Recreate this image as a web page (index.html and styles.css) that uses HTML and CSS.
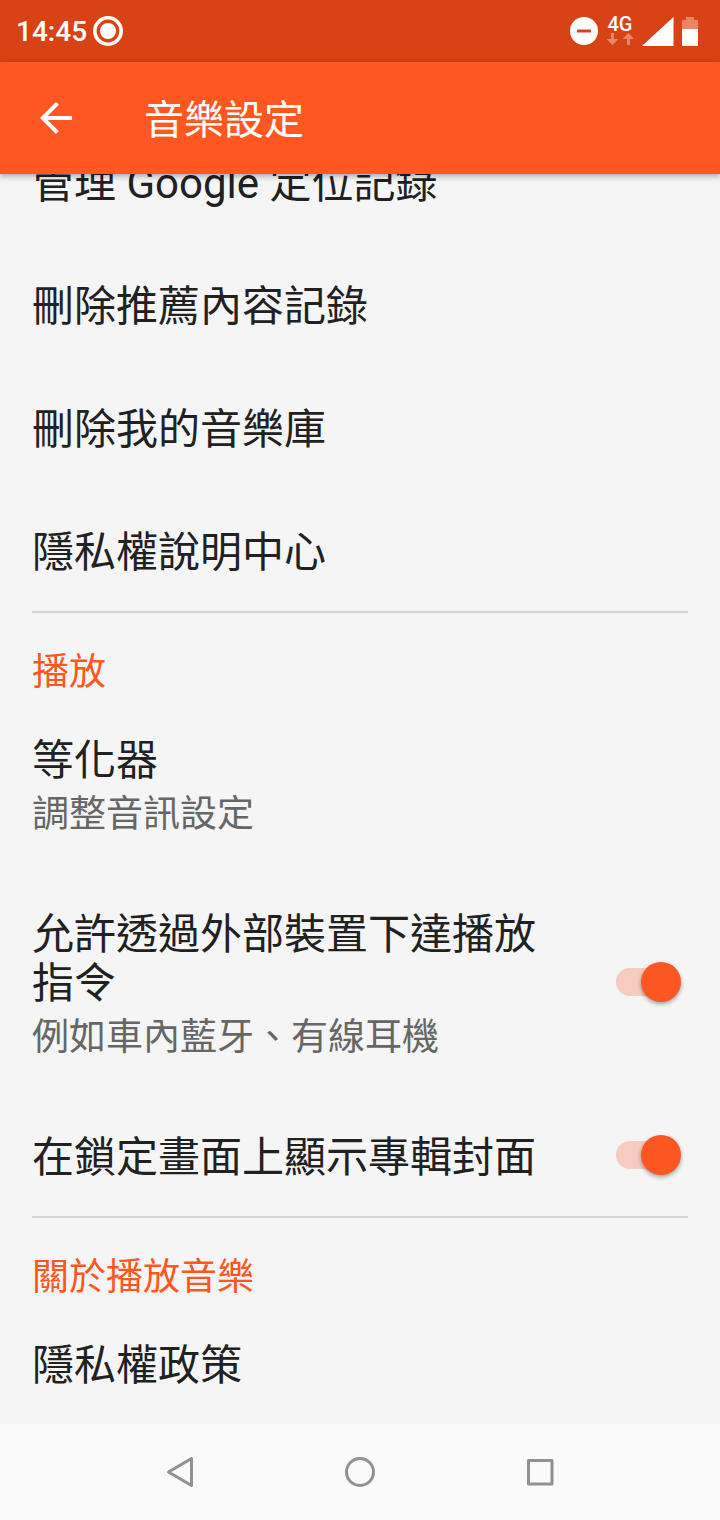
FILE: index.html
```html
<!doctype html>
<html lang="zh-Hant">
    <head>
        <meta charset="UTF-8" />
        <meta name="viewport" content="width=device-width, initial-scale=1.0" />
        <title>音樂設定</title>
        <link rel="stylesheet" href="styles.css">
    </head>
    <body>
        <!-- Status bar -->
        <div class="status-bar">
            <span class="clock">14:45</span>
            <svg class="record-icon" width="30" height="30" viewBox="0 0 30 30">
                <circle cx="15" cy="15" r="13.2" fill="none" stroke="#fff" stroke-width="3.6" />
                <circle cx="15" cy="15" r="8" fill="#fff" />
            </svg>
            <div class="status-icons">
                <svg width="28" height="28" viewBox="0 0 28 28">
                    <circle cx="14" cy="14" r="14" fill="#fff" />
                    <path d="M7 12.5h14v3H7z" fill="#d84315" />
                </svg>
                <div class="network">
                    <span class="network-type">4G</span>
                    <svg width="28" height="12" viewBox="0 0 28 12" fill="#e88667">
                        <path d="M5 0h3v6h4.500l-6 6-6-6H5z" />
                        <path d="M21 12h3V6h4l-5.500-6-6 6H21z" />
                    </svg>
                </div>
                <svg width="32" height="29" viewBox="0 0 32 29">
                    <path d="M31.500 0v29H0z" fill="#fff" />
                </svg>
                <svg class="battery-icon" width="16" height="29" viewBox="0 0 16 29">
                    <path d="M4 0h8v3h3q1 0 1 1v8H0V4q0-1 1-1h3z" fill="#e88667" />
                    <path d="M0 12h16v16q0 1-1 1H1q-1 0-1-1z" fill="#fff" />
                </svg>
            </div>
        </div>

        <!-- App bar -->
        <header class="app-bar">
            <button class="icon-button" type="button" aria-label="返回">
                <svg width="48" height="48" viewBox="0 0 24 24">
                    <path d="M20 11H7.830l5.590-5.590L12 4l-8 8 8 8 1.410-1.410L7.830 13H20z" fill="#fff" />
                </svg>
            </button>
            <h1>音樂設定</h1>
        </header>

        <!-- Settings list -->
        <main class="settings">
            <section class="group scrolled">
                <a class="row" href="#location"><span class="title">管理 Google 定位記錄</span></a>
                <a class="row" href="#recommendations"><span class="title">刪除推薦內容記錄</span></a>
                <a class="row" href="#library"><span class="title">刪除我的音樂庫</span></a>
                <a class="row" href="#privacy"><span class="title">隱私權說明中心</span></a>
            </section>

            <section class="group">
                <h2>播放</h2>
                <a class="row" href="#equalizer">
                    <span class="text">
                        <span class="title">等化器</span>
                        <span class="summary">調整音訊設定</span>
                    </span>
                </a>
                <label class="row" for="external-device">
                    <span class="text">
                        <span class="title">允許透過外部裝置下達播放指令</span>
                        <span class="summary">例如車內藍牙、有線耳機</span>
                    </span>
                    <input class="switch" type="checkbox" id="external-device" checked />
                </label>
                <label class="row" for="lock-screen">
                    <span class="text">
                        <span class="title">在鎖定畫面上顯示專輯封面</span>
                    </span>
                    <input class="switch" type="checkbox" id="lock-screen" checked />
                </label>
            </section>

            <section class="group">
                <h2>關於播放音樂</h2>
                <a class="row" href="#policy"><span class="title">隱私權政策</span></a>
            </section>
        </main>

        <!-- System navigation -->
        <nav class="nav-bar">
            <button class="nav-button" type="button" aria-label="返回">
                <svg width="32" height="32" viewBox="0 0 32 32">
                    <path d="M27.500 2.500v27L4.500 16z" />
                </svg>
            </button>
            <button class="nav-button" type="button" aria-label="主畫面">
                <svg width="32" height="32" viewBox="0 0 32 32">
                    <circle cx="16" cy="16" r="13.5" />
                </svg>
            </button>
            <button class="nav-button" type="button" aria-label="最近使用">
                <svg width="32" height="32" viewBox="0 0 32 32">
                    <path d="M4.500 4.500h23.500v23.500H4.500z" />
                </svg>
            </button>
        </nav>
    </body>
</html>
```
FILE: styles.css
```css
* {
    box-sizing: border-box;
}
body {
    display: flex;
    flex-direction: column;
    height: 100vh;
    margin: 0;
    font-family: Roboto, "Noto Sans CJK TC", sans-serif;
    background: #f5f5f5;
    color: #212121;
}
svg {
    display: block;
}
button {
    padding: 0;
    border: none;
    background: none;
    cursor: pointer;
}

.status-bar {
    display: flex;
    flex-shrink: 0;
    align-items: center;
    height: 62px;
    padding: 0 22px 0 16px;
    background: #d84315;
    color: #fff;
}
.clock {
    font-size: 28px;
    font-weight: 500;
}
.record-icon {
    margin-left: 6px;
}
.status-icons {
    display: flex;
    align-items: center;
    gap: 8px;
    margin-left: auto;
}
.network {
    display: flex;
    flex-direction: column;
    align-items: center;
    gap: 1px;
    padding-bottom: 2px;
}
.network-type {
    font-size: 20px;
    font-weight: 500;
    line-height: 16px;
}

.app-bar {
    display: flex;
    flex-shrink: 0;
    align-items: center;
    gap: 64px;
    height: 112px;
    padding: 0 32px;
    background: #ff5722;
    color: #fff;
    box-shadow: 0 2px 6px rgba(0, 0, 0, 0.35);
    z-index: 1;
}
.app-bar h1 {
    margin: 0 0 2px;
    font-size: 40px;
    font-weight: 400;
}

.settings {
    flex: 1;
    min-height: 0;
    overflow: hidden;
}
.scrolled {
    margin-top: -53px;
}
.group h2 {
    margin: 0;
    padding: 38px 32px 4px;
    font-size: 37px;
    font-weight: 400;
    line-height: 43px;
    color: #ff5722;
}
.group:not(:last-child) {
    background: linear-gradient(#d6d6d6, #d6d6d6) center bottom / calc(100% - 64px) 2px no-repeat;
}
.row {
    display: flex;
    align-items: center;
    gap: 48px;
    padding: 38px 39px 36px 32px;
    color: inherit;
    text-decoration: none;
}
.text {
    display: flex;
    flex: 1;
    flex-direction: column;
    gap: 8px;
}
.title {
    font-size: 42px;
    line-height: 49px;
}
.summary {
    font-size: 37px;
    line-height: 43px;
    color: #666;
}

.switch {
    appearance: none;
    display: grid;
    align-items: center;
    flex-shrink: 0;
    width: 65px;
    height: 40px;
    margin: 0 0 6px;
}
.switch::before,
.switch::after {
    content: "";
    grid-area: 1 / 1;
}
.switch::before {
    width: 56px;
    height: 28px;
    border-radius: 14px;
    background: #f8cbbf;
}
.switch::after {
    width: 40px;
    height: 40px;
    border-radius: 50%;
    background: #9e9e9e;
    box-shadow: 0 2px 4px rgba(0, 0, 0, 0.35);
}
.switch:checked::after {
    justify-self: end;
    background: #fc5622;
}

.nav-bar {
    display: flex;
    flex-shrink: 0;
    justify-content: center;
    height: 96px;
    background: #fafafa;
}
.nav-button {
    display: flex;
    align-items: center;
    justify-content: center;
    width: 25%;
}
.nav-button svg {
    fill: none;
    stroke: #919191;
    stroke-width: 3;
    stroke-linejoin: round;
}
```
